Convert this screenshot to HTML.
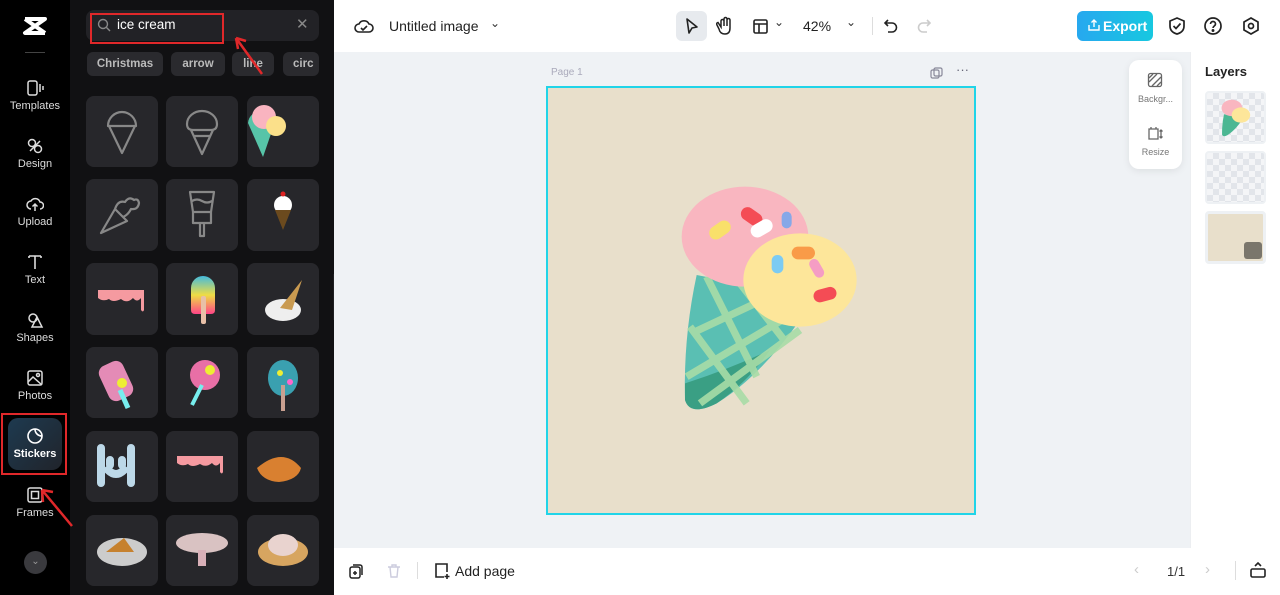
<!DOCTYPE html>
<html><head><meta charset="utf-8"><style>
*{margin:0;padding:0;box-sizing:border-box}
body{width:1280px;height:595px;overflow:hidden;font-family:"Liberation Sans",sans-serif;background:#fff;position:relative}
.abs{position:absolute}
.rail{left:0;top:0;width:70px;height:595px;background:#000}
.ri{position:absolute;left:0;width:70px;text-align:center;color:#ddd;font-size:11px}
.ri svg{display:block;margin:0 auto 3px}
.panel{left:70px;top:0;width:264px;height:595px;background:#111113}
.chip{position:absolute;top:52px;height:24px;background:#2a2a2e;border-radius:6px;color:#bbb;font-size:11.5px;font-weight:bold;line-height:24px;text-align:center}
.canvasbg{left:334px;top:52px;width:856px;height:496px;background:#eff2f5}
.t{color:#222;font-size:14px}
</style></head><body>
<div class="abs rail"></div>
<svg class="abs" style="left:22px;top:15px" width="26" height="22" viewBox="0 0 26 22"><path d="M3 4h20L3 18h20M3 4l20 14" stroke="#fff" stroke-width="4" fill="none" stroke-linejoin="round"/></svg>
<div class="abs" style="left:25px;top:52px;width:20px;height:1px;background:#444"></div>
<div class="ri" style="top:79px"><svg width="18" height="18" viewBox="0 0 18 18" fill="none" stroke="#ddd" stroke-width="1.5"><rect x="2" y="2" width="9" height="14" rx="2"/><path d="M14 5v8M17 7v4"/></svg>Templates</div>
<div class="ri" style="top:137px"><svg width="18" height="18" viewBox="0 0 18 18" fill="none" stroke="#ddd" stroke-width="1.5"><circle cx="6" cy="6" r="3.5"/><circle cx="12" cy="12" r="3.5"/><path d="M4 14l10-10"/></svg>Design</div>
<div class="ri" style="top:195px"><svg width="18" height="18" viewBox="0 0 18 18" fill="none" stroke="#ddd" stroke-width="1.5"><path d="M5 14a4 4 0 010-8 5 5 0 019 1 3.5 3.5 0 010 7M9 16V9M6.5 11.5L9 9l2.5 2.5"/></svg>Upload</div>
<div class="ri" style="top:253px"><svg width="18" height="18" viewBox="0 0 18 18" fill="none" stroke="#ddd" stroke-width="1.6"><path d="M3 3h12M9 3v13M3 3v2M15 3v2"/></svg>Text</div>
<div class="ri" style="top:311px"><svg width="18" height="18" viewBox="0 0 18 18" fill="none" stroke="#ddd" stroke-width="1.5"><circle cx="7" cy="7" r="4"/><path d="M11 6l5 10H6z"/></svg>Shapes</div>
<div class="ri" style="top:369px"><svg width="18" height="18" viewBox="0 0 18 18" fill="none" stroke="#ddd" stroke-width="1.5"><rect x="2" y="2" width="14" height="14" rx="2"/><path d="M2 13l5-5 9 8"/><circle cx="12" cy="6" r="1.5"/></svg>Photos</div>
<div class="abs" style="left:8px;top:418px;width:54px;height:52px;border-radius:10px;background:linear-gradient(135deg,#1e3a50,#20242b)"></div>
<div class="ri" style="top:427px;color:#fff;font-weight:bold"><svg width="18" height="18" viewBox="0 0 18 18" fill="none" stroke="#fff" stroke-width="1.6"><path d="M16 9A7 7 0 119 2c0 4 3 7 7 7zM9 2a7 7 0 017 7"/></svg>Stickers</div>
<div class="abs" style="left:1px;top:413px;width:66px;height:62px;border:2px solid #e0282a"></div>
<div class="ri" style="top:486px"><svg width="18" height="18" viewBox="0 0 18 18" fill="none" stroke="#ddd" stroke-width="1.5"><rect x="2" y="2" width="14" height="14" rx="2"/><rect x="5.5" y="5.5" width="7" height="7"/></svg>Frames</div>
<div class="abs" style="left:24px;top:551px;width:23px;height:23px;border-radius:50%;background:#3a3a3e;color:#999;font-size:10px;text-align:center;line-height:22px">⌄</div>

<div class="abs panel"></div>
<div class="abs" style="left:86px;top:10px;width:233px;height:31px;background:#222226;border-radius:8px"></div>
<svg class="abs" style="left:97px;top:18px" width="14" height="14" viewBox="0 0 14 14" fill="none" stroke="#888" stroke-width="1.4"><circle cx="6" cy="6" r="4.5"/><path d="M9.5 9.5L13 13"/></svg>
<div class="abs" style="left:117px;top:17px;color:#fff;font-size:13.5px">ice cream</div>
<div class="abs" style="left:296px;top:15px;color:#888;font-size:15px">✕</div>
<div class="abs" style="left:90px;top:13px;width:134px;height:31px;border:2px solid #e0282a"></div>
<div class="chip" style="left:87px;width:76px">Christmas</div>
<div class="chip" style="left:171px;width:54px">arrow</div>
<div class="chip" style="left:232px;width:42px">line</div>
<div class="chip" style="left:283px;width:36px;text-align:left;padding-left:10px;overflow:hidden">circ</div>
<svg class="abs" style="left:228px;top:32px;z-index:5" width="40" height="45"><path d="M34 42L8 6M8 6l2 11M8 6l10 3" stroke="#e0282a" stroke-width="2.5" fill="none"/></svg>
<svg class="abs" style="left:70px;top:0" width="264" height="595">
<g fill="#27272b">
<rect x="16" y="96" width="72" height="71" rx="8"/><rect x="96" y="96" width="72" height="71" rx="8"/><rect x="177" y="96" width="72" height="71" rx="8"/>
<rect x="16" y="179" width="72" height="72" rx="8"/><rect x="96" y="179" width="72" height="72" rx="8"/><rect x="177" y="179" width="72" height="72" rx="8"/>
<rect x="16" y="263" width="72" height="72" rx="8"/><rect x="96" y="263" width="72" height="72" rx="8"/><rect x="177" y="263" width="72" height="72" rx="8"/>
<rect x="16" y="347" width="72" height="71" rx="8"/><rect x="96" y="347" width="72" height="71" rx="8"/><rect x="177" y="347" width="72" height="71" rx="8"/>
<rect x="16" y="431" width="72" height="71" rx="8"/><rect x="96" y="431" width="72" height="71" rx="8"/><rect x="177" y="431" width="72" height="71" rx="8"/>
<rect x="16" y="515" width="72" height="71" rx="8"/><rect x="96" y="515" width="72" height="71" rx="8"/><rect x="177" y="515" width="72" height="71" rx="8"/>
</g>
<g fill="none" stroke="#888" stroke-width="2.2" stroke-linejoin="round">
<path d="M38 126a14 14 0 0128 0zM39 126l13 27 13-27"/>
<path d="M117 124a15 13 0 0130 0q0 6-6 6h-18q-6 0-6-6zM121 130l11 24 11-24M124 136h16"/>
<path d="M31 233l14-24 12 12zM45 209q3-9 10-7 4-6 9-2 4-2 5 3-1 7-8 6-3 6-8 8"/>
<path d="M120 192h24l-3 20h-18zM123 212h18v11h-18zM130 223v13h4v-13M122 201q5-3 10 0t10 0"/>
</g>
<path d="M178 123a13 13 0 0126 2l-11 32z" fill="#57c4a8"/><circle cx="194" cy="117" r="12" fill="#f9b4c0"/><circle cx="206" cy="126" r="10" fill="#fbe08a"/>
<circle cx="213" cy="205" r="9" fill="#fff"/><circle cx="213" cy="194" r="2.5" fill="#d22"/><path d="M205 210h16l-8 20z" fill="#6b4a1e"/>
<path d="M28 290h46v20q-1 3-3 0v-12q-4 5-8 0-6 6-12 1-8 4-12 0-6 3-11-1z" fill="#f59aa0"/>
<defs><linearGradient id="pg" x1="0" y1="0" x2="0" y2="1"><stop offset="0" stop-color="#4bd"/><stop offset=".5" stop-color="#ed4"/><stop offset="1" stop-color="#f48"/></linearGradient></defs>
<path d="M121 288a12 12 0 0124 0v22q0 4-4 4h-16q-4 0-4-4z" fill="url(#pg)"/><rect x="131" y="296" width="5" height="28" rx="2" fill="#e8c0a8"/>
<ellipse cx="213" cy="310" rx="18" ry="11" fill="#eee"/><path d="M210 308l22-28-10 30z" fill="#c99a50"/>
<rect x="33" y="362" width="26" height="38" rx="8" fill="#e48bb6" transform="rotate(-25 46 381)"/><path d="M50 390l8 18" stroke="#7ee" stroke-width="5"/><circle cx="52" cy="383" r="5" fill="#ee3"/>
<circle cx="135" cy="375" r="15" fill="#e86fa6"/><path d="M132 385l-10 20" stroke="#7ee" stroke-width="4"/><circle cx="140" cy="370" r="5" fill="#ee3"/>
<ellipse cx="213" cy="378" rx="15" ry="18" fill="#3aa0b0"/><rect x="211" y="385" width="4" height="26" fill="#c9a090"/><circle cx="210" cy="373" r="3" fill="#ee3"/><circle cx="220" cy="382" r="3" fill="#f6c"/>
<path d="M31 448v35M61 448v35M38 470q8 8 16 0M40 460v5M52 460v5" stroke="#bcd8e8" stroke-width="8" stroke-linecap="round" fill="none"/>
<path d="M107 456h46v16q-1 3-3 0v-9q-4 5-8 0-6 5-12 1-8 4-12 0-6 3-11-1z" fill="#f59aa0"/>
<path d="M187 468q26-22 44 0-3 12-22 14-17-1-22-14z" fill="#d98030"/>
<ellipse cx="52" cy="552" rx="25" ry="14" fill="#ccc"/><path d="M36 552h28l-10-14z" fill="#c6812e"/>
<ellipse cx="132" cy="543" rx="26" ry="10" fill="#d9c2c2"/><rect x="128" y="550" width="8" height="16" fill="#d9b0b8"/>
<ellipse cx="213" cy="552" rx="25" ry="14" fill="#d7a560"/><ellipse cx="213" cy="545" rx="15" ry="11" fill="#e9d3cf"/>
</svg>
<div class="abs" style="left:333px;top:274px;width:7px;height:46px;background:#1f1f22;border-radius:0 5px 5px 0"></div>

<div class="abs canvasbg"></div>
<svg class="abs" style="left:354px;top:17px" width="20" height="18" viewBox="0 0 20 18" fill="none" stroke="#222" stroke-width="1.6"><path d="M5 15a4 4 0 010-8 5.5 5.5 0 0110 0 4 4 0 010 8z M7 11l2 2 4-4"/></svg>
<div class="abs t" style="left:389px;top:18px">Untitled image</div>
<div class="abs" style="left:490px;top:16px;font-size:12px;color:#333">⌄</div>
<div class="abs" style="left:676px;top:11px;width:31px;height:30px;background:#e7eaee;border-radius:6px"></div>
<svg class="abs" style="left:684px;top:17px" width="16" height="18"><path d="M3 2l10 8-5 1-3 5z" fill="none" stroke="#222" stroke-width="1.6" stroke-linejoin="round"/></svg>
<svg class="abs" style="left:716px;top:16px" width="18" height="20" viewBox="0 0 18 20" fill="none" stroke="#222" stroke-width="1.5"><path d="M5 11V5a1.5 1.5 0 013 0v5V3a1.5 1.5 0 013 0v7V4a1.5 1.5 0 013 0v8q0 6-5 6t-6-5l-2-4q-1-2 1-2.5z"/></svg>
<svg class="abs" style="left:752px;top:18px" width="17" height="17" fill="none" stroke="#222" stroke-width="1.6"><rect x="2" y="2" width="13" height="13" rx="1.5"/><path d="M2 6h13M7 6v9"/></svg>
<div class="abs" style="left:774px;top:15px;font-size:12px;color:#333">⌄</div>
<div class="abs t" style="left:803px;top:18px">42%</div>
<div class="abs" style="left:846px;top:15px;font-size:12px;color:#333">⌄</div>
<div class="abs" style="left:872px;top:17px;width:1px;height:18px;background:#ddd"></div>
<svg class="abs" style="left:883px;top:17px" width="16" height="18" fill="none" stroke="#222" stroke-width="1.6"><path d="M5 3L2 6l3 3M2 6h7a4.5 4.5 0 010 9H5"/></svg>
<svg class="abs" style="left:916px;top:17px" width="16" height="18" fill="none" stroke="#ccc" stroke-width="1.6"><path d="M11 3l3 3-3 3M14 6H7a4.5 4.5 0 000 9h4"/></svg>
<div class="abs" style="left:1077px;top:11px;width:76px;height:30px;border-radius:6px;background:linear-gradient(90deg,#27a8ef,#17c8e0);color:#fff;font-weight:bold;font-size:14px;line-height:30px;padding-left:26px">Export</div>
<svg class="abs" style="left:1087px;top:18px" width="14" height="14" fill="none" stroke="#fff" stroke-width="1.4"><path d="M2 7v5h10V7M7 9V2M4.5 4.5L7 2l2.5 2.5"/></svg>
<svg class="abs" style="left:1168px;top:16px" width="18" height="20" fill="none" stroke="#222" stroke-width="1.7"><path d="M9 2l7 3v5q0 6-7 8-7-2-7-8V5z M5.5 10l2.5 2.5 4.5-5"/></svg>
<svg class="abs" style="left:1203px;top:16px" width="20" height="20" fill="none" stroke="#222" stroke-width="1.7"><circle cx="10" cy="10" r="8"/><path d="M7.5 8a2.5 2.5 0 115 0c0 2-2.5 2-2.5 4"/><circle cx="10" cy="14.5" r=".6" fill="#222"/></svg>
<svg class="abs" style="left:1241px;top:16px" width="20" height="20" fill="none" stroke="#222" stroke-width="1.7"><path d="M10 2l7 4v8l-7 4-7-4V6z"/><circle cx="10" cy="10" r="2.5"/></svg>

<div class="abs" style="left:551px;top:67px;font-size:10px;color:#aab">Page 1</div>
<svg class="abs" style="left:930px;top:67px" width="13" height="13" fill="none" stroke="#889" stroke-width="1.2"><rect x="1" y="3" width="8" height="8" rx="1.5"/><rect x="4" y="1" width="8" height="8" rx="1.5"/></svg>
<div class="abs" style="left:956px;top:62px;font-size:13px;color:#667">···</div>
<div class="abs" style="left:546px;top:86px;width:430px;height:429px;border:2px solid #20d4e8;background:#e8dfcb"></div>
<svg class="abs" style="left:660px;top:170px" width="220" height="250" viewBox="0 0 660 750">
<path d="M110 315L340 360 420 450Q300 620 170 700 90 740 75 690Q70 500 110 315z" fill="#5abfb3"/>
<path d="M75 640Q200 600 330 540 260 640 170 700 90 740 75 690z" fill="#3a9f84"/>
<g stroke="#a7dca6" stroke-width="22" fill="none" opacity=".9"><path d="M140 320L290 620M240 340L380 520M90 470L260 700M95 490L350 370M80 620L400 430M120 700L420 480"/></g>
<ellipse cx="255" cy="200" rx="190" ry="150" fill="#f9b6c0"/>
<ellipse cx="420" cy="330" rx="170" ry="140" fill="#fde69a"/>
<rect x="145" y="160" width="70" height="40" rx="20" fill="#f9e06a" transform="rotate(-35 180 180)"/>
<rect x="240" y="120" width="70" height="40" rx="20" fill="#f44c55" transform="rotate(35 275 140)"/>
<rect x="270" y="155" width="70" height="40" rx="20" fill="#fff" transform="rotate(-30 305 175)"/>
<rect x="365" y="125" width="30" height="50" rx="15" fill="#86a8e8"/>
<rect x="335" y="255" width="35" height="55" rx="17" fill="#7ccbf3"/>
<rect x="395" y="230" width="70" height="38" rx="19" fill="#f99b48"/>
<rect x="455" y="265" width="30" height="60" rx="15" fill="#f59dc4" transform="rotate(-30 470 295)"/>
<rect x="460" y="355" width="70" height="38" rx="19" fill="#f44c55" transform="rotate(-15 495 374)"/>
</svg>

<div class="abs" style="left:1129px;top:60px;width:53px;height:109px;background:#fff;border-radius:10px;box-shadow:0 2px 8px rgba(0,0,0,.08)"></div>
<svg class="abs" style="left:1147px;top:72px" width="16" height="16" fill="none" stroke="#666" stroke-width="1.3"><rect x="1.5" y="1.5" width="13" height="13" rx="2"/><path d="M2 10l8-8M5 14l9-9M2 6l4-4M10 14l4-4"/></svg>
<div class="abs" style="left:1129px;top:94px;width:53px;text-align:center;font-size:9px;color:#777">Backgr...</div>
<svg class="abs" style="left:1147px;top:125px" width="16" height="16" fill="none" stroke="#666" stroke-width="1.3"><path d="M2 4h9v10H2zM4 2v2M9 2v2M14 5v8M12.5 6.5L14 5l1.5 1.5M12.5 11.5L14 13l1.5-1.5"/></svg>
<div class="abs" style="left:1129px;top:147px;width:53px;text-align:center;font-size:9px;color:#777">Resize</div>

<div class="abs" style="left:1190px;top:52px;width:1px;height:496px;background:#eceef1"></div>
<div class="abs" style="left:1205px;top:64px;font-size:13px;font-weight:bold;color:#222">Layers</div>
<div class="abs" style="left:1205px;top:91px;width:61px;height:53px;border-radius:4px;background:repeating-conic-gradient(#e2e5ea 0 25%,#f4f5f7 0 50%) 0 0/12px 12px;border:2px solid #eef1f4"></div>
<svg class="abs" style="left:1218px;top:95px" width="36" height="45" viewBox="0 0 660 750"><path d="M110 315L340 360 420 450Q300 620 170 700 90 740 75 690Q70 500 110 315z" fill="#4cb793"/><ellipse cx="255" cy="200" rx="190" ry="150" fill="#f9b6c0"/><ellipse cx="420" cy="330" rx="170" ry="140" fill="#fde69a"/></svg>
<div class="abs" style="left:1205px;top:151px;width:61px;height:53px;border-radius:4px;background:repeating-conic-gradient(#e2e5ea 0 25%,#f4f5f7 0 50%) 0 0/12px 12px;border:2px solid #eef1f4"></div>
<div class="abs" style="left:1205px;top:211px;width:61px;height:53px;border-radius:4px;background:#e8dfcb;border:3px solid #eef1f4"></div>
<div class="abs" style="left:1244px;top:242px;width:18px;height:17px;border-radius:3px;background:#7a766c"></div>

<svg class="abs" style="left:348px;top:563px" width="16" height="17" fill="none" stroke="#222" stroke-width="1.5"><rect x="2" y="4" width="10" height="11" rx="2"/><path d="M5 2h7a2 2 0 012 2v8M7 8v4M5 10h4"/></svg>
<svg class="abs" style="left:387px;top:563px" width="14" height="16" fill="none" stroke="#ccd" stroke-width="1.4"><path d="M1 4h12M5 4V2h4v2M3 4l1 10h6l1-10"/></svg>
<div class="abs" style="left:417px;top:562px;width:1px;height:17px;background:#ddd"></div>
<svg class="abs" style="left:433px;top:562px" width="18" height="18" fill="none" stroke="#222" stroke-width="1.6"><path d="M11 15H3V2h11v8M14 12v5M11.5 14.5h5"/></svg>
<div class="abs t" style="left:455px;top:563px">Add page</div>
<div class="abs" style="left:1134px;top:561px;font-size:15px;color:#ccc">‹</div>
<div class="abs" style="left:1167px;top:564px;font-size:13px;color:#333">1/1</div>
<div class="abs" style="left:1205px;top:561px;font-size:15px;color:#ccc">›</div>
<div class="abs" style="left:1235px;top:561px;width:1px;height:19px;background:#ddd"></div>
<svg class="abs" style="left:1249px;top:560px" width="18" height="20" fill="none" stroke="#222" stroke-width="1.6"><rect x="2" y="9" width="14" height="8" rx="1.5"/><path d="M6 6l3-3 3 3"/></svg>
<svg class="abs" style="left:36px;top:480px;z-index:5" width="40" height="50"><path d="M36 46L6 10M6 10l1 12M6 10l11 2" stroke="#e0282a" stroke-width="2.5" fill="none"/></svg>
</body></html>
